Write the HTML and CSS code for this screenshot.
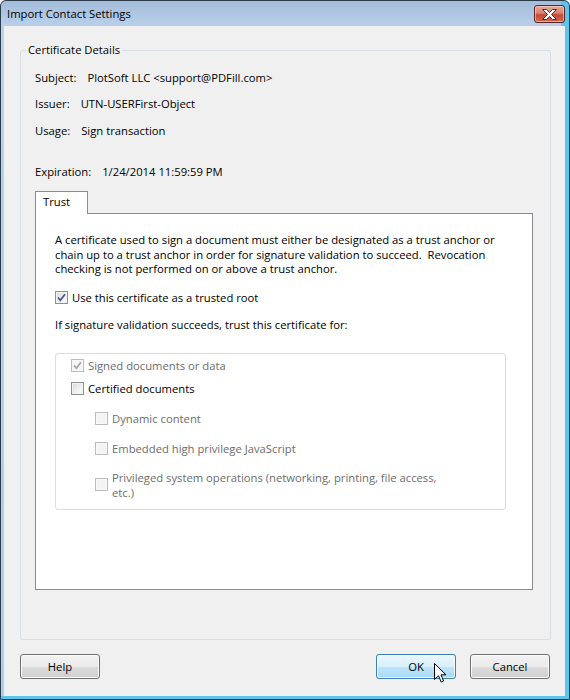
FILE: index.html
```html
<!DOCTYPE html>
<html>
<head>
<meta charset="utf-8">
<title>Import Contact Settings</title>
<link rel="stylesheet" href="styles.css">
</head>
<body>
<div class="window">
  <div class="titlebar">
    <span class="title">Import Contact Settings</span>
    <div class="close">
      <svg width="15" height="11" viewBox="0 0 15 11"><path d="M0.5 0.5 H4.5 L7.5 3.5 L10.5 0.5 H14.5 L9.5 5.5 L14.5 10.5 H10.5 L7.5 7.5 L4.5 10.5 H0.5 L5.5 5.5 Z" fill="#ffffff" stroke="#3a3a3a" stroke-width="1" stroke-linejoin="round"/></svg>
    </div>
  </div>
  <div class="client">
    <div class="group">
      <div class="legend">Certificate Details</div>
      <div class="row r-subject"><span class="lbl">Subject:</span><span>PlotSoft LLC &lt;support@PDFill.com&gt;</span></div>
      <div class="row r-issuer"><span class="lbl">Issuer:</span><span>UTN-USERFirst-Object</span></div>
      <div class="row r-usage"><span class="lbl">Usage:</span><span>Sign transaction</span></div>
      <div class="row r-exp"><span class="lbl">Expiration:</span><span>1/24/2014 11:59:59 PM</span></div>
      <div class="tabstrip"><div class="tab">Trust</div></div>
      <div class="panel">
        <p class="para">A certificate used to sign a document must either be designated as a trust anchor or<br>chain up to a trust anchor in order for signature validation to succeed.&nbsp; Revocation<br>checking is not performed on or above a trust anchor.</p>
        <div class="cbrow use-row">
          <span class="box"><svg width="11" height="11" viewBox="0 0 11 11"><path d="M2 5.5 L4.3 8.3 L9 2.3" fill="none" stroke="#4a5c8e" stroke-width="1.8"/></svg></span>
          <span>Use this certificate as a trusted root</span>
        </div>
        <p class="if-line">If signature validation succeeds, trust this certificate for:</p>
        <div class="inner">
          <div class="cbrow opt r1 dis">
            <span class="box off"><svg width="11" height="11" viewBox="0 0 11 11"><path d="M2 5.5 L4.3 8.3 L9 2.3" fill="none" stroke="#a4a4a4" stroke-width="1.6"/></svg></span>
            <span>Signed documents or data</span>
          </div>
          <div class="cbrow opt r2">
            <span class="box"></span>
            <span>Certified documents</span>
          </div>
          <div class="cbrow opt sub r3 dis">
            <span class="box off"></span>
            <span>Dynamic content</span>
          </div>
          <div class="cbrow opt sub r4 dis">
            <span class="box off"></span>
            <span>Embedded high privilege JavaScript</span>
          </div>
          <div class="cbrow opt sub r5 dis">
            <span class="box off"></span>
            <span>Privileged system operations (networking, printing, file access,<br>etc.)</span>
          </div>
        </div>
      </div>
    </div>
    <div class="buttons">
      <div class="btn">Help</div>
      <div class="spacer"></div>
      <div class="btn default">OK
        <svg class="cursor" width="13" height="20" viewBox="0 0 13 20"><path d="M0.5 0.5 V16.5 L4.5 12.8 L7.2 19 L9.6 18 L7 11.8 L12 11.8 Z" fill="#ffffff" stroke="#000000" stroke-width="1" stroke-linejoin="miter"/></svg>
      </div>
      <div class="btn">Cancel</div>
    </div>
  </div>
</div>
</body>
</html>
```

FILE: styles.css
```css
* { box-sizing: border-box; }
html, body { margin: 0; padding: 0; }
body {
  width: 570px;
  height: 700px;
  background: #ffffff;
  font-family: "Open Sans", "Noto Sans", sans-serif;
  font-size: 11.25px;
  color: #000000;
  overflow: hidden;
}
.window {
  width: 570px;
  height: 700px;
  border: 1px solid #2c3a4a;
  border-radius: 6px 6px 0 0;
  background:
    linear-gradient(to right, transparent 560px, #5cc5ee 560px),
    linear-gradient(to top, #5cc5ee 3px, transparent 3px),
    linear-gradient(#a3bcd9 0px, #b9d0ea 25px, #b4d3ee 26px, #a9d0ee 100%);
  padding: 0 4px 3px 3px;
  display: flex;
  flex-direction: column;
}
.titlebar {
  height: 25px;
  display: flex;
  align-items: flex-start;
  justify-content: space-between;
  flex-shrink: 0;
}
.title {
  margin: 5px 0 0 3px;
  line-height: 16px;
  color: #000;
}
.close {
  width: 31px;
  height: 18px;
  margin: 4px 0 0 0;
  border: 1px solid #5a2623;
  border-radius: 3px;
  background: linear-gradient(#e6a99b 0%, #d98070 45%, #c24a36 55%, #cf6a52 100%);
  box-shadow: inset 0 0 0 1px rgba(255, 220, 210, 0.55);
  display: flex;
  align-items: center;
  justify-content: center;
}
.close svg { display: block; }
.client {
  flex: 1;
  background: #f0f0f0;
  display: flex;
  flex-direction: column;
}
.group {
  margin: 24px 14px 0 16px;
  height: 590px;
  border: 1px solid #d5dfe5;
  border-radius: 3px;
  padding: 0 17px 0 14px;
  flex-shrink: 0;
}
.legend {
  width: max-content;
  margin: -9px 0 0 -9px;
  padding: 0 2px;
  line-height: 16px;
  background: #f0f0f0;
}
.row {
  line-height: 16px;
  white-space: nowrap;
}
.lbl { margin-right: 11px; }
.r-subject { margin-top: 12px; }
.r-issuer { margin-top: 10px; }
.r-usage { margin-top: 11px; }
.r-exp { margin-top: 25px; }
.tabstrip {
  display: flex;
  margin-top: 11px;
}
.tab {
  width: 53px;
  height: 23px;
  border: 1px solid #898c95;
  border-bottom: none;
  background: #ffffff;
  margin-bottom: -1px;
  position: relative;
  z-index: 1;
  padding: 2px 0 0 7px;
  line-height: 16px;
}
.panel {
  height: 377px;
  border: 1px solid #898c95;
  background: #ffffff;
  padding: 19px 0 0 19px;
}
.para {
  margin: 0;
  line-height: 14.5px;
  white-space: nowrap;
}
.cbrow {
  display: flex;
  align-items: center;
  line-height: 16px;
  white-space: nowrap;
}
.cbrow .box { margin-right: 4px; }
.use-row { margin-top: 13px; }
.if-line {
  margin: 11px 0 0 0;
  line-height: 16px;
}
.box {
  width: 13px;
  height: 13px;
  flex-shrink: 0;
  border: 1px solid #8e8f8f;
  background: linear-gradient(135deg, #d9dadb 0%, #f1f1f1 60%, #fdfdfd 100%);
  box-shadow: inset 0 0 0 1px #f3f3f3;
  display: flex;
  align-items: center;
  justify-content: center;
}
.box svg { display: block; }
.box.off {
  border-color: #bcbcbc;
  background: #f4f4f4;
  box-shadow: inset 0 0 0 1px #f8f8f8;
}
.inner {
  margin-top: 20px;
  width: 451px;
  height: 157px;
  border: 1px solid #d5dfe5;
  border-radius: 3px;
  padding: 4px 0 0 15px;
}
.opt { line-height: 15px; }
.dis { color: #6d6d6d; }
.sub { margin-left: 24px; }
.r2 { margin-top: 8px; }
.r3 { margin-top: 15px; }
.r4 { margin-top: 15px; }
.r5 { margin-top: 14px; }
.buttons {
  display: flex;
  margin-top: 14px;
  padding: 0 15px 0 16px;
  gap: 14px;
}
.spacer { flex: 1; }
.btn {
  width: 80px;
  height: 25px;
  border: 1px solid #707070;
  border-radius: 3px;
  background: linear-gradient(#f2f2f2 0%, #ebebeb 50%, #dddddd 50%, #cfcfcf 100%);
  box-shadow: inset 0 0 0 1px #fbfbfb;
  display: flex;
  align-items: center;
  justify-content: center;
  line-height: 16px;
  position: relative;
}
.btn.default {
  border-color: #3c7fb1;
  background: linear-gradient(#eaf6fd 0%, #d9f0fc 50%, #bee6fd 50%, #a7d9f5 100%);
  box-shadow: inset 0 0 0 1px #f4fbff;
}
.cursor {
  position: absolute;
  left: 57px;
  top: 8px;
}
```
